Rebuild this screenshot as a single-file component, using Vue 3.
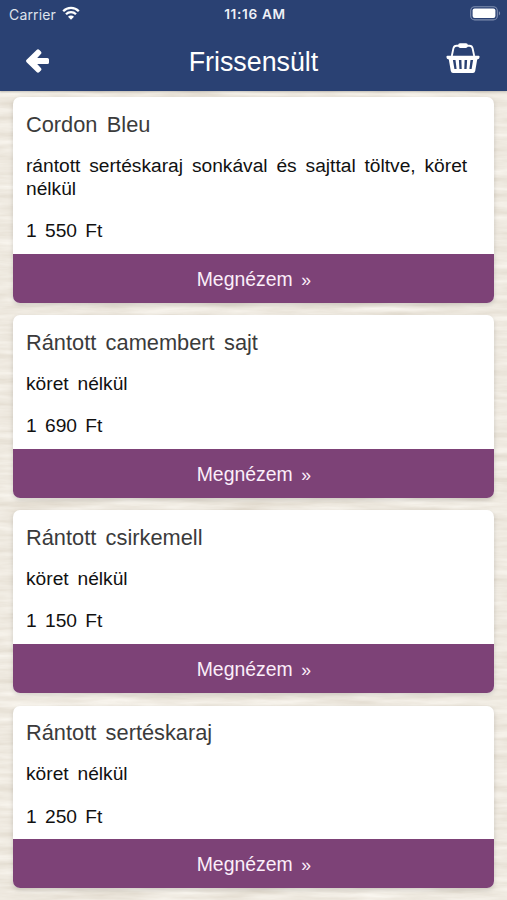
<template>
  <div class="screen">
    <!-- wood grain background -->
    <svg class="wood" aria-hidden="true">
      <defs>
        <filter id="grain" x="0" y="0" width="100%" height="100%" color-interpolation-filters="sRGB">
          <feTurbulence type="fractalNoise" baseFrequency="0.014 0.13" numOctaves="5" seed="7" />
          <feColorMatrix
            values="0.13 0 0 0 0.870
                    0.15 0 0 0 0.840
                    0.18 0 0 0 0.788
                    0 0 0 0 1"
          />
        </filter>
      </defs>
      <rect width="100%" height="100%" filter="url(#grain)" />
    </svg>

    <header class="header">
      <div class="status-bar">
        <div class="carrier">
          <span>Carrier</span>
          <svg class="wifi" viewBox="0 0 18 14" fill="none" stroke="#fff" stroke-width="2.3">
            <path d="M1.2 5.2a11 11 0 0 1 15.6 0" />
            <path d="M4 8.2a7 7 0 0 1 10 0" />
            <path d="M9 13.8L6 10.7a4.2 4.2 0 0 1 6 0z" fill="#fff" stroke="none" />
          </svg>
        </div>
        <span class="time">11:16 AM</span>
        <svg class="battery" viewBox="0 0 31 15">
          <rect x="0.7" y="0.7" width="26.6" height="13.2" rx="4" fill="none" stroke="#7f8eb0" stroke-width="1.1" />
          <rect x="2.6" y="2.6" width="22.8" height="9.4" rx="2" fill="#fff" />
          <path d="M28.9 5.2c1.6.6 1.6 3.6 0 4.2z" fill="#7f8eb0" />
        </svg>
      </div>
      <div class="nav-bar">
        <button class="nav-btn" aria-label="Vissza">
          <svg class="back" viewBox="0 0 23 24" fill="#fff">
            <path
              d="M.6 10.8L10.6 .9Q12 -.3 13.4 .9L14.9 2.4Q16 3.7 14.9 5L11.2 8.9H21.4Q23 8.9 23 10.5V13.5Q23 15.1 21.4 15.1H11.2L14.9 19Q16 20.3 14.9 21.6L13.4 23.1Q12 24.3 10.6 23.1L.6 13.2Q-.5 12 .6 10.8z"
            />
          </svg>
        </button>
        <h1>{{ title }}</h1>
        <button class="nav-btn" aria-label="Kosár">
          <svg class="basket" viewBox="0 0 34 30">
            <path
              d="M5.8 13L7.4 5.4Q8 2.8 10.6 2.8H23.4Q26 2.8 26.6 5.4L28.2 13"
              fill="none"
              stroke="#fff"
              stroke-width="1.9"
            />
            <rect x="12.2" y="0.3" width="9.6" height="4.6" rx="1.8" fill="#fff" />
            <path
              fill="#fff"
              fill-rule="evenodd"
              d="M1.4 12.8H32.6Q33.6 12.8 33.6 14Q33.6 16.4 31.2 16.6L29.2 28Q28.8 30 27 30H7Q5.2 30 4.8 28L2.8 16.6Q.4 16.4 .4 14Q.4 12.8 1.4 12.8z
                 M6.9 17L8.4 26H10.6L9.5 17z
                 M12.9 17L13.4 26H15.7L15.4 17z
                 M18.6 17L18.3 26H20.6L21.1 17z
                 M24.5 17L23.4 26H25.6L27.1 17z"
            />
          </svg>
        </button>
      </div>
    </header>

    <main class="list">
      <article v-for="item in items" :key="item.name" class="card">
        <div class="card-body">
          <h2>{{ item.name }}</h2>
          <p class="description">{{ item.description }}</p>
          <p class="price">{{ item.price }} Ft</p>
        </div>
        <button class="view-btn">Megnézem <span class="chevrons">»</span></button>
      </article>
    </main>
  </div>
</template>

<script setup>
import { ref } from 'vue'

const title = ref('Frissensült')

const items = ref([
  {
    name: 'Cordon Bleu',
    description: 'rántott sertéskaraj sonkával és sajttal töltve, köret nélkül',
    price: '1 550'
  },
  { name: 'Rántott camembert sajt', description: 'köret nélkül', price: '1 690' },
  { name: 'Rántott csirkemell', description: 'köret nélkül', price: '1 150' },
  { name: 'Rántott sertéskaraj', description: 'köret nélkül', price: '1 250' }
])
</script>

<style>
body {
  margin: 0;
  overflow: hidden;
}
</style>

<style scoped>
.screen {
  position: relative;
  height: 900px;
  display: flex;
  flex-direction: column;
  overflow: hidden;
  background: #ece6de;
  font-family: "Liberation Sans", Arial, sans-serif;
}

.wood {
  position: absolute;
  inset: 0;
  width: 100%;
  height: 100%;
}

.header {
  position: relative;
  height: 91px;
  flex-shrink: 0;
  background: #2a4173;
  color: #fff;
  box-shadow: 0 1px 2px rgba(0, 0, 0, 0.2);
}

.status-bar {
  height: 28px;
  display: grid;
  grid-template-columns: 1fr auto 1fr;
  align-items: center;
  padding: 0 6px 0 9px;
  font-family: Inter, "Liberation Sans", sans-serif;
  font-size: 14px;
}

.carrier {
  display: flex;
  align-items: center;
  gap: 6px;
  color: #dfe3ec;
  letter-spacing: 0.15px;
}

.wifi {
  width: 18px;
  height: 14px;
  margin-top: -3px;
}

.time {
  font-size: 13.6px;
  font-weight: 600;
  letter-spacing: 0.7px;
  color: #eef0f6;
}

.battery {
  width: 31px;
  height: 15px;
  margin-top: -1px;
  justify-self: end;
}

.nav-bar {
  height: 63px;
  display: flex;
  align-items: center;
  justify-content: space-between;
  padding: 0 27px 0 26px;
}

.nav-btn {
  display: flex;
  width: 34px;
  padding: 0;
  border: none;
  background: none;
  cursor: pointer;
}

.back {
  width: 23px;
  height: 24px;
  margin-top: 2px;
}

.basket {
  width: 34px;
  height: 30px;
  margin-top: -3px;
}

h1 {
  margin: 5px 0 0 1px;
  font-size: 26.8px;
  line-height: 32px;
  font-weight: 400;
}

.list {
  position: relative;
  display: flex;
  flex-direction: column;
  gap: 12.5px;
  padding: 6.4px 12.6px 0 13.4px;
}

.card {
  flex-shrink: 0;
  overflow: hidden;
  border-radius: 7px;
  background: #fff;
  box-shadow: 0 2px 5px rgba(0, 0, 0, 0.14);
}

.card-body {
  padding: 14.6px 13px 10.8px 12.6px;
}

h2 {
  margin: 0 0 16.7px;
  font-size: 21.8px;
  line-height: 26px;
  font-weight: 400;
  word-spacing: 3.3px;
  color: #3b3b3b;
}

p {
  margin: 0;
  font-size: 19.2px;
  line-height: 22.9px;
  word-spacing: 3.5px;
  color: #111;
}

.price {
  margin-top: 19.8px;
  word-spacing: 3px;
}

.view-btn {
  display: block;
  width: 100%;
  height: 48.9px;
  padding: 2px 0 0;
  border: none;
  background: #7d4277;
  color: #fbeefa;
  font-family: inherit;
  font-size: 19.4px;
  word-spacing: 3.3px;
  cursor: pointer;
}

.chevrons {
  font-size: 17.5px;
}
</style>
